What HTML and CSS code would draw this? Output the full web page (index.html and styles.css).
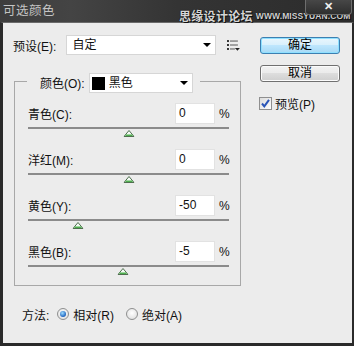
FILE: index.html
```html
<!DOCTYPE html>
<html>
<head>
<meta charset="utf-8">
<link rel="stylesheet" href="styles.css">
</head>
<body>
<div class="window">
  <div class="titlebar">
    <span class="title">可选颜色</span>
    <span class="watermark"><span class="wm-cn">思缘设计论坛</span><span class="wm-en">WWW.MISSYUAN.COM</span></span>
    <span class="close">✕</span>
  </div>
  <div class="frame">
    <div class="left">
      <div class="preset-row">
        <span class="lbl preset-lbl">预设(E):</span>
        <div class="select preset-select"><span>自定</span><i class="caret"></i></div>
        <svg class="menu-icon" width="14" height="11" viewBox="0 0 14 11">
          <rect x="0" y="0" width="2" height="2" fill="#333"/>
          <rect x="3" y="0.5" width="8" height="1" fill="#555"/>
          <rect x="0" y="4" width="2" height="2" fill="#333"/>
          <rect x="3" y="4.5" width="8" height="1" fill="#555"/>
          <rect x="0" y="8" width="2" height="2" fill="#333"/>
          <rect x="3" y="8.5" width="5" height="1" fill="#555"/>
          <polygon points="8,8 13,8 10.5,10.8" fill="#222"/>
        </svg>
      </div>
      <fieldset class="group">
        <legend class="legend">
          <span class="lbl legend-lbl">颜色(O):</span>
          <div class="select color-select"><span class="swatch"></span><span>黑色</span><i class="caret"></i></div>
        </legend>
        <div class="rows">
          <div class="row">
            <div class="field"><span class="lbl">青色(C):</span><span class="input">0</span><span class="pct">%</span></div>
            <div class="slider"><div class="track"></div><svg class="thumb" style="left:50%" width="11" height="7" viewBox="0 0 11 7"><polygon points="5.5,0.5 10.5,6.5 0.5,6.5" fill="#f4fbf4" stroke="#4f6f4f"/><rect x="2" y="4.5" width="7" height="1.5" fill="#4fb04f"/></svg></div>
          </div>
          <div class="row">
            <div class="field"><span class="lbl">洋红(M):</span><span class="input">0</span><span class="pct">%</span></div>
            <div class="slider"><div class="track"></div><svg class="thumb" style="left:50%" width="11" height="7" viewBox="0 0 11 7"><polygon points="5.5,0.5 10.5,6.5 0.5,6.5" fill="#f4fbf4" stroke="#4f6f4f"/><rect x="2" y="4.5" width="7" height="1.5" fill="#4fb04f"/></svg></div>
          </div>
          <div class="row">
            <div class="field"><span class="lbl">黄色(Y):</span><span class="input">-50</span><span class="pct">%</span></div>
            <div class="slider"><div class="track"></div><svg class="thumb" style="left:25%" width="11" height="7" viewBox="0 0 11 7"><polygon points="5.5,0.5 10.5,6.5 0.5,6.5" fill="#f4fbf4" stroke="#4f6f4f"/><rect x="2" y="4.5" width="7" height="1.5" fill="#4fb04f"/></svg></div>
          </div>
          <div class="row">
            <div class="field"><span class="lbl">黑色(B):</span><span class="input">-5</span><span class="pct">%</span></div>
            <div class="slider"><div class="track"></div><svg class="thumb" style="left:47.5%" width="11" height="7" viewBox="0 0 11 7"><polygon points="5.5,0.5 10.5,6.5 0.5,6.5" fill="#f4fbf4" stroke="#4f6f4f"/><rect x="2" y="4.5" width="7" height="1.5" fill="#4fb04f"/></svg></div>
          </div>
        </div>
      </fieldset>
      <div class="method">
        <span class="lbl">方法:</span>
        <span class="radio checked"></span><span class="radio-lbl">相对(R)</span>
        <span class="radio second"></span><span class="radio-lbl">绝对(A)</span>
      </div>
    </div>
    <div class="right">
      <button class="btn btn-default">确定</button>
      <button class="btn btn-cancel">取消</button>
      <div class="check">
        <span class="box"><svg width="11" height="11" viewBox="0 0 11 11"><path d="M2 5.5 L4.3 8.3 L9 1.8" fill="none" stroke="#2a55b8" stroke-width="2"/></svg></span>
        <span class="check-lbl">预览(P)</span>
      </div>
    </div>
  </div>
</div>
</body>
</html>
```

FILE: styles.css
```css
* { box-sizing: border-box; }
html, body { margin: 0; padding: 0; }
body {
  width: 354px;
  height: 346px;
  overflow: hidden;
  background: #2b2b2b;
  font-family: "Liberation Sans", "Noto Sans CJK SC", sans-serif;
  font-size: 12px;
  color: #111;
}
.window {
  width: 354px;
  height: 346px;
  display: flex;
  flex-direction: column;
}
.titlebar {
  position: relative;
  height: 22px;
  flex: none;
  background: linear-gradient(90deg, #3d3d3d 0%, #444 20%, #343434 50%, #2c2c2c 100%);
  padding: 2px 0 0 3px;
}
.title {
  font-family: "Noto Sans CJK SC", sans-serif;
  font-size: 12.5px;
  line-height: 16px;
  color: #c4c4c4;
  letter-spacing: 0.5px;
}
.watermark {
  position: absolute;
  left: 179px;
  bottom: 0;
  display: flex;
  align-items: flex-end;
  gap: 3px;
  line-height: 12px;
  color: #d6d6d6;
  text-shadow: 0 0 1px #000, 1px 1px 0 #111;
}
.wm-cn {
  font-family: "Noto Sans CJK SC", sans-serif;
  font-weight: bold;
  font-size: 12px;
  letter-spacing: 0.3px;
}
.wm-en {
  font-family: "Liberation Sans", sans-serif;
  font-weight: bold;
  font-size: 8.5px;
  line-height: 11px;
  letter-spacing: 0.1px;
  color: #cfcfcf;
}
.close {
  position: absolute;
  top: 0;
  right: 2px;
  width: 47px;
  height: 15px;
  border: 1px solid #6e6e6e;
  border-top: none;
  border-radius: 0 0 4px 4px;
  background: linear-gradient(#474747, #2e2e2e);
  color: #f0f0f0;
  font-size: 11px;
  font-weight: bold;
  line-height: 13px;
  text-align: center;
}
.frame {
  flex: 1;
  display: flex;
  background: #ececec;
  border-left: 3px solid #2a2a2a;
  border-right: 2px solid #2a2a2a;
  border-bottom: 3px solid #2a2a2a;
  border-top: 1px solid #6b6b6b;
  padding: 12px 0 0 10px;
}
.lbl, .radio-lbl, .check-lbl, .select span, .btn {
  font-family: "Liberation Sans", "Noto Sans CJK SC", sans-serif;
  font-size: 12px;
}
.left {
  width: 228px;
  display: flex;
  flex-direction: column;
}
.preset-row {
  display: flex;
  align-items: center;
  height: 20px;
}
.preset-lbl { width: 54px; }
.select {
  height: 20px;
  background: #fff;
  border: 1px solid #d6d6d6;
  display: flex;
  align-items: center;
  padding-left: 5px;
  line-height: 18px;
}
.preset-select { width: 151px; }
.caret {
  width: 0;
  height: 0;
  margin-left: auto;
  margin-right: 4px;
  border-left: 4px solid transparent;
  border-right: 4px solid transparent;
  border-top: 4px solid #000;
}
.menu-icon { margin-left: 11px; margin-top: 1px; }
.group {
  margin: 18px 0 0 1px;
  width: 227px;
  border: 1px solid #a8a8a8;
  padding: 0 11px 10px 13px;
  min-width: 0;
}
.legend {
  display: flex;
  align-items: flex-start;
  height: 16px;
  padding: 0 7px 0 13px;
  margin-left: -1px;
}
.legend-lbl { line-height: 20px; padding-top: 1px; margin-right: 4px; }
.color-select { width: 104px; padding-left: 2px; }
.swatch {
  width: 13px;
  height: 13px;
  background: #000;
  margin-right: 4px;
}
.rows {
  margin-top: 14px;
  display: flex;
  flex-direction: column;
  gap: 12px;
}
.row { display: flex; flex-direction: column; }
.field {
  display: flex;
  align-items: center;
  height: 21px;
}
.field .lbl { flex: 1; }
.input {
  width: 40px;
  height: 21px;
  background: #fff;
  border: 1px solid #e2e2e2;
  padding-left: 3px;
  line-height: 19px;
  font-size: 12px;
}
.pct { margin-left: 4px; width: 10px; font-size: 12px; }
.slider {
  position: relative;
  margin-top: 3px;
  height: 10px;
}
.track {
  height: 2px;
  background: #8b8b8b;
}
.thumb {
  position: absolute;
  top: 3px;
  transform: translateX(-50%);
}
.method {
  margin-top: 20px;
  padding-left: 9px;
  display: flex;
  align-items: center;
  height: 16px;
}
.radio {
  width: 12px;
  height: 12px;
  border-radius: 50%;
  border: 1px solid #8e8f8f;
  background: radial-gradient(circle at 50% 40%, #fff, #d9d9d9);
  margin-left: 8px;
  position: relative;
  flex: none;
}
.radio.second { margin-left: 12px; }
.radio.checked::after {
  content: "";
  position: absolute;
  left: 2px;
  top: 2px;
  width: 6px;
  height: 6px;
  border-radius: 50%;
  background: radial-gradient(circle at 40% 35%, #9ddcff, #1d64c0 70%, #0e3f8c);
}
.radio-lbl { margin-left: 4px; }
.right {
  margin-left: 19px;
  width: 80px;
  display: flex;
  flex-direction: column;
}
.btn {
  height: 17px;
  width: 80px;
  margin: 2px 0 0 0;
  padding: 0;
  border-radius: 3px;
  line-height: 15px;
  color: #000;
  text-align: center;
}
.btn-default {
  border: 1px solid #3c7fb1;
  background: linear-gradient(#eaf6fd 0%, #d9f0fc 45%, #bee6fd 50%, #a7d9f5 100%);
  box-shadow: inset 0 0 0 1px #8fe0ff;
}
.btn-cancel {
  margin-top: 11px;
  border: 1px solid #707070;
  background: linear-gradient(#f2f2f2 0%, #ebebeb 45%, #dddddd 50%, #cfcfcf 100%);
  box-shadow: inset 0 0 0 1px #fbfbfb;
}
.check {
  margin-top: 15px;
  margin-left: -1px;
  display: flex;
  align-items: center;
  height: 13px;
}
.box {
  width: 13px;
  height: 13px;
  border: 1px solid #8f8f8f;
  background: linear-gradient(135deg, #dcdcdc, #fdfdfd);
  display: flex;
  align-items: center;
  justify-content: center;
}
.check-lbl { margin-left: 3px; }
```
